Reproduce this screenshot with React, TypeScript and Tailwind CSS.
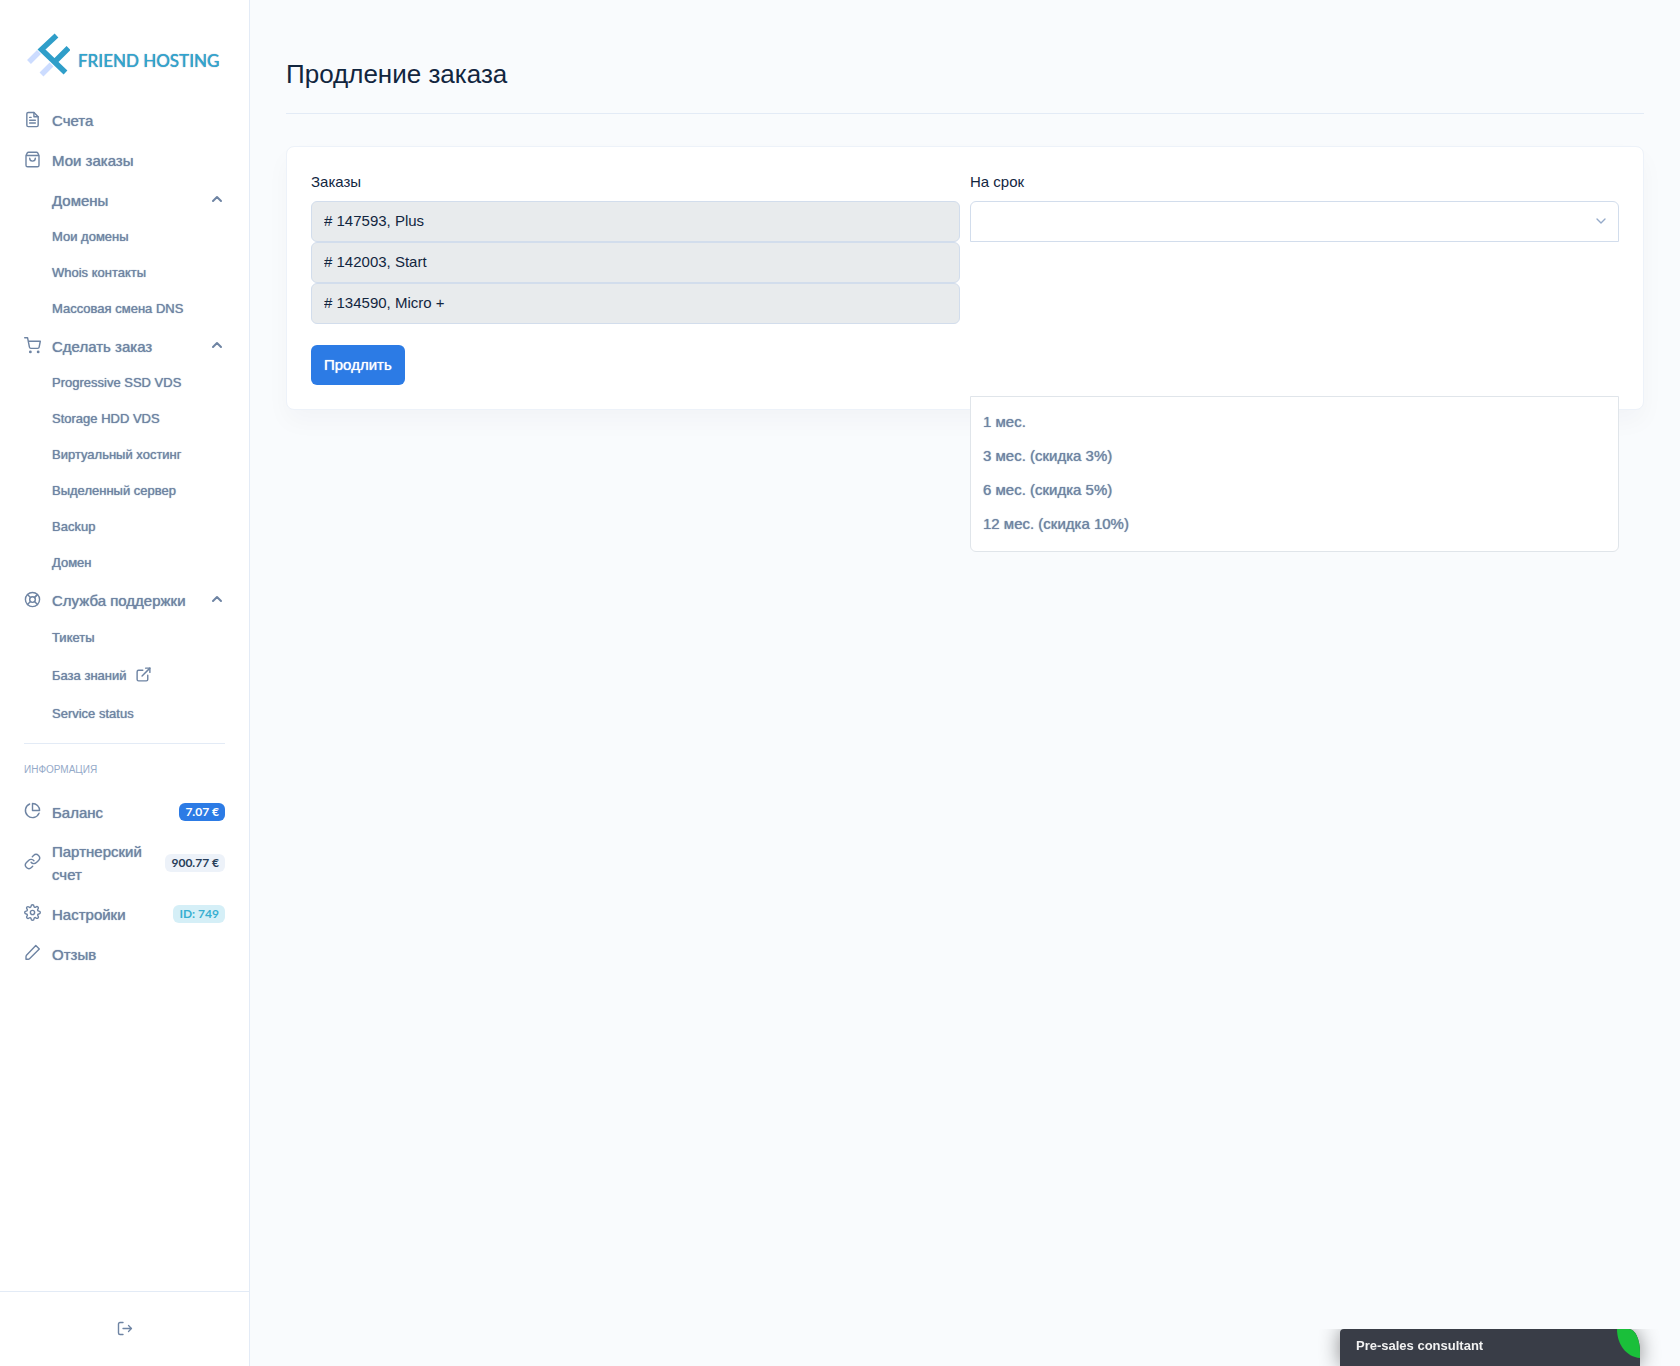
import React, { useState } from 'react';
import {
  FiChevronDown,
  FiChevronUp,
  FiExternalLink,
  FiFileText,
  FiLifeBuoy,
  FiLink,
  FiPieChart,
  FiSettings,
  FiShoppingCart,
} from 'react-icons/fi';

interface SubItem {
  label: string;
  external?: boolean;
}

interface NavItem {
  label: string;
  icon?: React.ReactNode;
  children?: SubItem[];
  roomy?: boolean;
}

interface InfoItem {
  label: string;
  icon: React.ReactNode;
  badge?: string;
  badgeClass?: string;
}

const BagIcon: React.FC = () => (
  <svg width="17" height="17" viewBox="0 0 17 17" fill="none" stroke="currentColor" strokeWidth="1.400" strokeLinecap="round" strokeLinejoin="round">
    <path d="M2 4.500 3.300 1.900Q3.700 1.200 4.500 1.200H12.500Q13.300 1.200 13.700 1.900L15 4.500V14.200Q15 15.800 13.400 15.800H3.600Q2 15.800 2 14.200ZM2 4.500H15" />
    <path d="M5.700 7.300A2.800 2.800 0 0 0 11.300 7.300" />
  </svg>
);

const PencilIcon: React.FC = () => (
  <svg width="17" height="17" viewBox="0 0 17 17" fill="none" stroke="currentColor" strokeWidth="1.400" strokeLinecap="round" strokeLinejoin="round">
    <path d="M11.800 1.500 15.300 5 5.500 14.800Q5 15.300 4.300 15.300H2V12.700Q2 11.800 2.500 11.200Z" />
  </svg>
);

const NAV_ITEMS: NavItem[] = [
  { label: 'Счета', icon: <FiFileText size={17} /> },
  { label: 'Мои заказы', icon: <BagIcon /> },
  {
    label: 'Домены',
    children: [{ label: 'Мои домены' }, { label: 'Whois контакты' }, { label: 'Массовая смена DNS' }],
  },
  {
    label: 'Сделать заказ',
    icon: <FiShoppingCart size={17} />,
    children: [
      { label: 'Progressive SSD VDS' },
      { label: 'Storage HDD VDS' },
      { label: 'Виртуальный хостинг' },
      { label: 'Выделенный сервер' },
      { label: 'Backup' },
      { label: 'Домен' },
    ],
  },
  {
    label: 'Служба поддержки',
    icon: <FiLifeBuoy size={17} />,
    roomy: true,
    children: [{ label: 'Тикеты' }, { label: 'База знаний', external: true }, { label: 'Service status' }],
  },
];

const INFO_ITEMS: InfoItem[] = [
  { label: 'Баланс', icon: <FiPieChart size={17} />, badge: '7.07 €', badgeClass: 'bg-[#2c7be5] text-white' },
  { label: 'Партнерский счет', icon: <FiLink size={17} />, badge: '900.77 €', badgeClass: 'bg-[#edf2f9] text-[#283e59]' },
  { label: 'Настройки', icon: <FiSettings size={17} />, badge: 'ID: 749', badgeClass: 'bg-[#d5eff7] text-[#39afd1]' },
  { label: 'Отзыв', icon: <PencilIcon /> },
];

const ORDERS = ['# 147593, Plus', '# 142003, Start', '# 134590, Micro +'];

const PERIODS = ['1 мес.', '3 мес. (скидка 3%)', '6 мес. (скидка 5%)', '12 мес. (скидка 10%)'];

const Logo: React.FC = () => (
  <a href="#" className="flex items-center gap-2 pl-[3px]" aria-label="Friend Hosting">
    <svg width="43" height="44" viewBox="0 0 43 44" fill="none" strokeWidth="5.500">
      <path d="M2 29 12 19M14.500 41.500 24.500 31.500" stroke="#ccdcff" />
      <path d="M29.500 2.500 14.500 16.500 38.500 39.500M27.500 29 41.500 15" stroke="#2f9ec9" />
    </svg>
    <span className="pt-3 font-[Lato,sans-serif] text-[17px] leading-6 font-medium whitespace-nowrap text-[#2fa5d0]">
      FRIEND HOSTING
    </span>
  </a>
);

const NavGroup: React.FC<{ item: NavItem }> = ({ item }) => {
  const [open, setOpen] = useState(true);

  if (!item.children) {
    return (
      <li>
        <a href="#" className="flex items-center py-2 leading-6">
          <span className="w-7 shrink-0 pb-1">{item.icon}</span>
          {item.label}
        </a>
      </li>
    );
  }

  return (
    <li>
      <button
        type="button"
        aria-expanded={open}
        onClick={() => setOpen(!open)}
        className="flex w-full items-center py-2 text-left leading-6 [text-shadow:0_0_1px_#6e84a3]"
      >
        <span className="w-7 shrink-0 pb-1">{item.icon}</span>
        <span className="grow whitespace-nowrap">{item.label}</span>
        <FiChevronUp size={16} strokeWidth={3} className={open ? 'mb-1' : 'mb-1 rotate-180'} />
      </button>
      {open && (
        <ul className="-mt-0.5 text-[13px]">
          {item.children.map((sub) => (
            <li key={sub.label}>
              <a href="#" className={`flex items-center gap-2 pl-7 ${item.roomy ? 'h-[38px]' : 'h-9'}`}>
                {sub.label}
                {sub.external && <FiExternalLink size={17} className="mb-1" />}
              </a>
            </li>
          ))}
        </ul>
      )}
    </li>
  );
};

const Sidebar: React.FC = () => (
  <aside className="sticky top-0 flex h-screen w-[250px] shrink-0 flex-col border-r border-[#e3ebf6] bg-white text-[15px] text-[#6e84a3] [text-shadow:0_0_1px_#6e84a3]">
    <div className="grow overflow-hidden px-6 pt-[33px]">
      <Logo />
      <nav className="pt-6">
        <ul>
          {NAV_ITEMS.map((item) => (
            <NavGroup key={item.label} item={item} />
          ))}
        </ul>
        <hr className="mt-2.5 border-[#e3ebf6]" />
        <h6 className="pt-4 pb-3 text-[10px] leading-5 text-[#95aac9] uppercase [text-shadow:none]">Информация</h6>
        <ul>
          {INFO_ITEMS.map((item) => (
            <li key={item.label}>
              <a href="#" className="flex min-h-10 items-center py-2 leading-[23px]">
                <span className="w-7 shrink-0 pb-1">{item.icon}</span>
                <span className="grow">{item.label}</span>
                {item.badge && (
                  <span
                    className={`shrink-0 rounded-md px-1.5 font-[Lato,sans-serif] text-xs leading-[18px] font-bold whitespace-nowrap [text-shadow:none] ${item.badgeClass}`}
                  >
                    {item.badge}
                  </span>
                )}
              </a>
            </li>
          ))}
        </ul>
      </nav>
    </div>
    <div className="flex h-[75px] shrink-0 items-center justify-center border-t border-[#e3ebf6]">
      <button type="button" aria-label="Выход">
        <svg width="16" height="16" viewBox="0 0 16 16" fill="none" stroke="currentColor" strokeLinecap="round" strokeLinejoin="round">
          <path d="M6 1.500H3Q1.500 1.500 1.500 3V12Q1.500 13.500 3 13.500H6" strokeWidth="1.400" />
          <path d="M6 7.500H14.500M11.500 4.500 14.500 7.500 11.500 10.500" strokeWidth="1.300" />
        </svg>
      </button>
    </div>
  </aside>
);

const RenewalForm: React.FC = () => {
  const [period, setPeriod] = useState('');

  return (
    <form
      onSubmit={(e) => e.preventDefault()}
      className="rounded-lg border border-[#edf2f9] bg-white p-6 shadow-[0_12px_24px_rgba(18,38,63,0.03)]"
    >
      <div className="grid grid-cols-2 gap-2.5">
        <fieldset>
          <legend className="pb-2 leading-[22px]">Заказы</legend>
          {ORDERS.map((order) => (
            <input
              key={order}
              type="text"
              readOnly
              aria-label="Заказ"
              value={order}
              className="block h-[41px] w-full rounded-md border border-[#d2ddec] bg-[#e8ebed] px-3 pb-0.5 outline-none"
            />
          ))}
        </fieldset>
        <div className="relative">
          <label htmlFor="period" className="block pb-2 leading-[22px]">
            На срок
          </label>
          <div className="relative">
            <select
              id="period"
              value={period}
              onChange={(e) => setPeriod(e.target.value)}
              className="block h-[41px] w-full appearance-none rounded-t-md border border-[#d2ddec] bg-white px-3 outline-none"
            >
              <option value=""></option>
              {PERIODS.map((p) => (
                <option key={p}>{p}</option>
              ))}
            </select>
            <FiChevronDown size={16} className="pointer-events-none absolute top-3 right-2.5 text-[#95aac9]" />
          </div>
          {/* Opened list of periods, hangs over the card's bottom edge */}
          <ul
            role="listbox"
            aria-label="На срок"
            className="absolute inset-x-0 top-[225px] rounded-b-md border border-[#e0e5ea] bg-white pt-2 pb-2.5 text-[#6e84a3] [text-shadow:0_0_1px_#6e84a3]"
          >
            {PERIODS.map((p) => (
              <li
                key={p}
                role="option"
                aria-selected={p === period}
                onClick={() => setPeriod(p)}
                className="cursor-pointer px-3 leading-[34px]"
              >
                {p}
              </li>
            ))}
          </ul>
        </div>
      </div>
      <button
        type="submit"
        className="mt-[21px] h-10 rounded-md bg-[#2c7be5] px-[13px] text-white [text-shadow:0_0_1px_#ffffff]"
      >
        Продлить
      </button>
    </form>
  );
};

const ChatWidget: React.FC = () => (
  <div className="fixed right-0 bottom-0 overflow-hidden px-10">
    <button
      type="button"
      className="relative block h-[37px] w-[300px] overflow-hidden rounded-tl-sm rounded-tr-[11px_23px] bg-[#393d47] px-4 pb-1 text-left text-[13px] font-bold text-[#f2f2f2] shadow-[0_0_20px_rgba(0,0,0,0.45)]"
    >
      Pre-sales consultant
      <svg className="absolute top-0 right-0" width="23" height="29" viewBox="0 0 23 29">
        <path d="M0 0H23V29C9 28 0 15 0 0Z" fill="#1abf3a" />
      </svg>
    </button>
  </div>
);

const App: React.FC = () => {
  return (
    <div className="flex min-h-screen bg-[#f9fbfd] font-['Liberation_Sans',Arial,sans-serif] text-[15px] text-[#12263f]">
      <Sidebar />
      <main className="min-w-0 grow px-9">
        <header className="border-b border-[#e3ebf6] pt-[58px] pb-[23px]">
          <h1 className="text-[26px] leading-8">Продление заказа</h1>
        </header>
        <div className="pt-8">
          <RenewalForm />
        </div>
      </main>
      <ChatWidget />
    </div>
  );
};

export default App;
